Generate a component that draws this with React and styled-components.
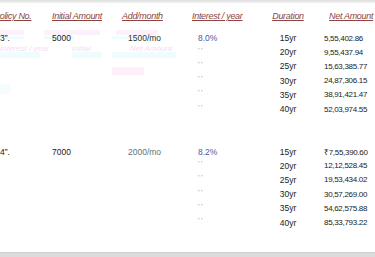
import React from 'react'
import styled, { createGlobalStyle } from 'styled-components'

const GlobalStyle = createGlobalStyle`
  html, body { margin: 0; padding: 0; background: #fff; }
  body { font-family: "Liberation Sans", Arial, sans-serif; }
`

const Page = styled.div`
  position: relative;
  width: 375px;
  height: 257px;
  overflow: hidden;
  display: flex;
  flex-direction: column;
  background-color: #fff;
`

const TopBand = styled.div`
  height: 3px;
  background: linear-gradient(#dedede, #f2f2f2);
`

const BottomBand = styled.div`
  height: 4px;
  border-top: 1px solid #cfcfcf;
  background: #dcdcdc;
`

const Sheet = styled.div`
  position: relative;
  flex: 1;
`

const Grid = styled.div`
  display: grid;
  grid-template-columns: 58px 70px 70px 76px 40px 1fr;
  grid-template-rows: 28px;
  grid-auto-rows: 14.2px;
  margin-left: -6px;
`

const HeadCell = styled.div`
  padding-bottom: 2px;
  box-sizing: border-box;
  display: flex;
  align-items: center;
  justify-content: ${(p) => (p.center ? 'center' : 'flex-start')};
  padding-left: ${(p) => p.pad || 0}px;
  font-size: 9px;
  letter-spacing: -0.3px;
  font-style: italic;
  color: #8e4440;
  text-decoration: underline;
  text-underline-offset: 1px;
  white-space: nowrap;
`

const Cell = styled.div`
  display: flex;
  align-items: center;
  justify-content: ${(p) => (p.center ? 'center' : 'flex-start')};
  padding-left: ${(p) => p.pad || 0}px;
  font-size: ${(p) => p.size || 8.5}px;
  letter-spacing: ${(p) => p.track || 0}px;
  color: ${(p) => p.color || '#222'};
  white-space: nowrap;
`

const Ditto = styled.span`
  font-size: 8px;
  color: #a0a0a0;
  margin-top: -4px;
  letter-spacing: 1.5px;
`

const Blank = styled.div`
  grid-column: 1 / -1;
`

const Ghost = styled.div`
  position: absolute;
  left: ${(p) => p.x}px;
  top: ${(p) => p.y}px;
  min-width: ${(p) => p.w}px;
  height: ${(p) => p.h}px;
  background: ${(p) => p.bg || 'transparent'};
  color: #f6dcf2;
  font-size: 8px;
  font-style: italic;
  line-height: ${(p) => p.h}px;
  white-space: nowrap;
  pointer-events: none;
`

const blocks = [
  {
    no: '3”.',
    initial: '5000',
    add: '1500/mo',
    addColor: '#333',
    rate: '8.0%',
    rows: [
      ['15yr', '5,55,402.86'],
      ['20yr', '9,55,437.94'],
      ['25yr', '15,63,385.77'],
      ['30yr', '24,87,306.15'],
      ['35yr', '38,91,421.47'],
      ['40yr', '52,03,974.55'],
    ],
  },
  {
    no: '4”.',
    initial: '7000',
    add: '2000/mo',
    addColor: '#5a7480',
    rate: '8.2%',
    rows: [
      ['15yr', '₹7,55,390.60'],
      ['20yr', '12,12,528.45'],
      ['25yr', '19,53,434.02'],
      ['30yr', '30,57,269.00'],
      ['35yr', '54,62,575.88'],
      ['40yr', '85,33,793.22'],
    ],
  },
]

// faint pink / cyan ghosting left over on the photographed screen
const ghosts = [
  { x: 0, y: 30, w: 24, h: 5, bg: '#fcf0fa' },
  { x: 44, y: 30, w: 56, h: 5, bg: '#fcf0fa' },
  { x: 116, y: 30, w: 42, h: 5, bg: '#fcf0fa' },
  { x: 0, y: 36, w: 24, h: 3, bg: '#effcfd' },
  { x: 44, y: 36, w: 30, h: 3, bg: '#effcfd' },
  { x: 112, y: 36, w: 48, h: 3, bg: '#effcfd' },
  { x: 0, y: 45, w: 40, h: 7, text: 'Interest / year' },
  { x: 72, y: 45, w: 30, h: 7, text: 'Initial' },
  { x: 130, y: 45, w: 46, h: 7, text: 'Net Amount' },
  { x: 0, y: 52, w: 40, h: 6, bg: '#eefcfd' },
  { x: 72, y: 52, w: 30, h: 6, bg: '#eefcfd' },
  { x: 112, y: 52, w: 64, h: 6, bg: '#eefcfd' },
  { x: 112, y: 67, w: 32, h: 8, bg: '#fdf0fa' },
  { x: 0, y: 84, w: 10, h: 10, bg: '#f4fcfd' },
]

export default function App() {
  return (
    <>
      <GlobalStyle />
      <Page>
        {ghosts.map((g, i) => (
          <Ghost key={i} x={g.x} y={g.y} w={g.w} h={g.h} bg={g.bg}>
            {g.text}
          </Ghost>
        ))}
        <TopBand />
        <Sheet>
          <Grid>
            <HeadCell>Policy No.</HeadCell>
            <HeadCell>Initial Amount</HeadCell>
            <HeadCell>Add/month</HeadCell>
            <HeadCell>Interest / year</HeadCell>
            <HeadCell center>Duration</HeadCell>
            <HeadCell pad={21}>Net Amount</HeadCell>

            {blocks.map((b, bi) => (
              <React.Fragment key={b.no}>
                {bi > 0 && (
                  <>
                    <Blank />
                    <Blank />
                  </>
                )}
                {b.rows.map(([dur, net], i) => (
                  <React.Fragment key={dur}>
                    <Cell pad={6}>{i === 0 ? b.no : ''}</Cell>
                    <Cell>{i === 0 ? b.initial : ''}</Cell>
                    <Cell pad={6} color={b.addColor}>{i === 0 ? b.add : ''}</Cell>
                    <Cell pad={6} color="#5157a3">
                      {i === 0 ? b.rate : <Ditto>''</Ditto>}
                    </Cell>
                    <Cell center>{dur}</Cell>
                    <Cell pad={16} size={8} track={-0.3} color="#222">{net}</Cell>
                  </React.Fragment>
                ))}
              </React.Fragment>
            ))}
          </Grid>
        </Sheet>
        <BottomBand />
      </Page>
    </>
  )
}
